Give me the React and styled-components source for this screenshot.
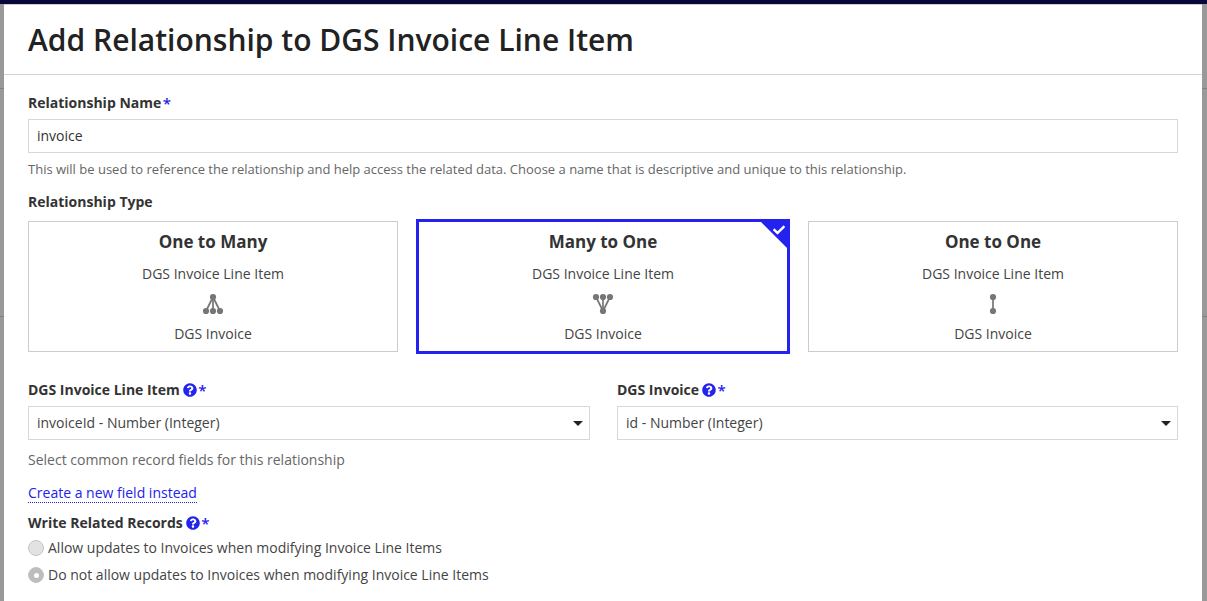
import React from "react";
import styled, { createGlobalStyle } from "styled-components";
import { FaCheck, FaQuestionCircle } from "react-icons/fa";

const Global = createGlobalStyle`
  html, body { margin: 0; padding: 0; height: 100%; overflow: hidden; background: #999; }
  body { font-family: "Open Sans", sans-serif; color: #222; }
  * { box-sizing: border-box; }
`;
const Page = styled.div`
  width: 1207px; height: 601px; overflow: hidden; display: flex; flex-direction: column;
  background: linear-gradient(#999 0 88px, #808080 88px 89px, #999 89px 316px, #808080 316px 317px, #999 317px);
`;
const TopBar = styled.div`height: 4px; background: #07073a; flex: none;`;
const Modal = styled.div`
  flex: 1; margin: 0 5px 0 4px; background: #fff; border-top: 1px solid #ccc; min-height: 0;
`;
const Header = styled.header`
  height: 70px; padding: 14px 24px 0; border-bottom: 1px solid #d4d4d4;
`;
const Title = styled.h1`
  margin: 0; font-size: 30px; line-height: 41px; font-weight: 600; color: #222;
`;
const Body = styled.div`padding: 18px 24px 0;`;
const Label = styled.div`
  display: flex; align-items: center; font-size: 14px; line-height: 20px; font-weight: 700; color: #333;
`;
const Req = styled.span`color: #2322ee; font-weight: 600; margin-left: 1.5px; font-size: 15px;`;
const Help = styled(FaQuestionCircle)`color: #2322ee; width: 14px; height: 14px; margin-left: 3px;`;
const Input = styled.div`
  margin-top: 6px; height: 34px; border: 1px solid #d8d8d8; padding: 0 8px; font-size: 14px; line-height: 32px; color: #333;
`;
const Hint = styled.div`
  margin-top: 7px; font-size: 13px; line-height: 18px; color: #666;
`;
const TypeLabel = styled(Label)`margin-top: 14px;`;
const Cards = styled.div`
  margin-top: 9px; display: grid; grid-template-columns: repeat(3, 370px); gap: 20px;
`;
const Card = styled.div`
  position: relative; height: 131px; border: 1px solid #ccc; display: flex; flex-direction: column; align-items: center;
  padding-top: 9px; color: #444; font-size: 14px; line-height: 20px;
  ${p => p.$selected && `border: 3px solid #2322ee; margin: -2px; height: 135px;`}
`;
const CardTitle = styled.div`font-size: 17px; line-height: 22px; font-weight: 700; color: #333; margin-bottom: 11px;`;
const CardIcon = styled.svg`width: 24px; height: 24px; margin: 8px 0 8px; display: block; flex: none;`;
const Corner = styled.div`
  position: absolute; top: 0; right: 0; width: 26px; height: 26px; background: #2322ee;
  clip-path: polygon(0 0, 100% 0, 100% 100%);
`;
const CornerCheck = styled(FaCheck)`
  position: absolute; top: 2px; right: 2px; width: 12px; height: 12px; color: #fff;
`;
const Fields = styled.div`
  margin-top: 28px; display: grid; grid-template-columns: 562px 561px; column-gap: 27px;
`;
const Select = styled.div`
  margin-top: 6px; height: 34px; border: 1px solid #d8d8d8; padding: 0 8px; font-size: 14px; line-height: 32px; color: #444;
  display: flex; align-items: center; justify-content: space-between;
`;
const Caret = styled.span`
  width: 0; height: 0; border-left: 5px solid transparent; border-right: 5px solid transparent; border-top: 5px solid #222; margin-right: -2px;
`;
const FieldHint = styled.div`margin-top: 10px; font-size: 14px; line-height: 20px; color: #666;`;
const LinkRow = styled.div`margin-top: 13px; font-size: 14px; line-height: 20px;`;
const Link = styled.a`color: #2322ee; border-bottom: 1px dotted #2322ee;`;
const WriteLabel = styled(Label)`margin-top: 10px;`;
const RadioRow = styled.label`
  display: flex; align-items: center; gap: 4px; font-size: 14px; line-height: 20px; color: #444; margin-top: ${p => p.$first ? 5 : 7}px;
`;
const Radio = styled.span`
  width: 16px; height: 16px; border-radius: 50%; border: 1px solid #c4c4c4; background: ${p => p.$on ? "#bdbdbd" : "#e2e2e2"};
  display: flex; align-items: center; justify-content: center;
  &::after { content: ""; width: 5px; height: 5px; border-radius: 50%; background: ${p => p.$on ? "#fff" : "transparent"}; }
`;

const Diagram = ({ tops, bottoms }) => (
  <CardIcon viewBox="0 0 24 24" fill="#767676" stroke="#767676">
    {tops.map(t => bottoms.map(b => <line key={`${t}-${b}`} x1={t} y1="5" x2={b} y2="19" strokeWidth="1.7" />))}
    {tops.map(x => <circle key={`t${x}`} cx={x} cy="5" r="3.1" stroke="none" />)}
    {bottoms.map(x => <circle key={`b${x}`} cx={x} cy="19" r="3.1" stroke="none" />)}
  </CardIcon>
);

const TypeCard = ({ title, tops, bottoms, selected }) => (
  <Card $selected={selected}>
    <CardTitle>{title}</CardTitle>
    <div>DGS Invoice Line Item</div>
    <Diagram tops={tops} bottoms={bottoms} />
    <div>DGS Invoice</div>
    {selected && <><Corner /><CornerCheck /></>}
  </Card>
);

export default function App() {
  return (
    <Page>
      <Global />
      <TopBar />
      <Modal>
        <Header><Title>Add Relationship to DGS Invoice Line Item</Title></Header>
        <Body>
          <Label>Relationship Name<Req>*</Req></Label>
          <Input>invoice</Input>
          <Hint>This will be used to reference the relationship and help access the related data. Choose a name that is descriptive and unique to this relationship.</Hint>
          <TypeLabel>Relationship Type</TypeLabel>
          <Cards>
            <TypeCard title="One to Many" tops={[12]} bottoms={[5, 12, 19]} />
            <TypeCard title="Many to One" tops={[5, 12, 19]} bottoms={[12]} selected />
            <TypeCard title="One to One" tops={[12]} bottoms={[12]} />
          </Cards>
          <Fields>
            <div>
              <Label>DGS Invoice Line Item<Help /><Req>*</Req></Label>
              <Select>invoiceId - Number (Integer)<Caret /></Select>
            </div>
            <div>
              <Label>DGS Invoice<Help /><Req>*</Req></Label>
              <Select>id - Number (Integer)<Caret /></Select>
            </div>
          </Fields>
          <FieldHint>Select common record fields for this relationship</FieldHint>
          <LinkRow><Link>Create a new field instead</Link></LinkRow>
          <WriteLabel>Write Related Records<Help /><Req>*</Req></WriteLabel>
          <RadioRow $first><Radio />Allow updates to Invoices when modifying Invoice Line Items</RadioRow>
          <RadioRow><Radio $on />Do not allow updates to Invoices when modifying Invoice Line Items</RadioRow>
        </Body>
      </Modal>
    </Page>
  );
}
